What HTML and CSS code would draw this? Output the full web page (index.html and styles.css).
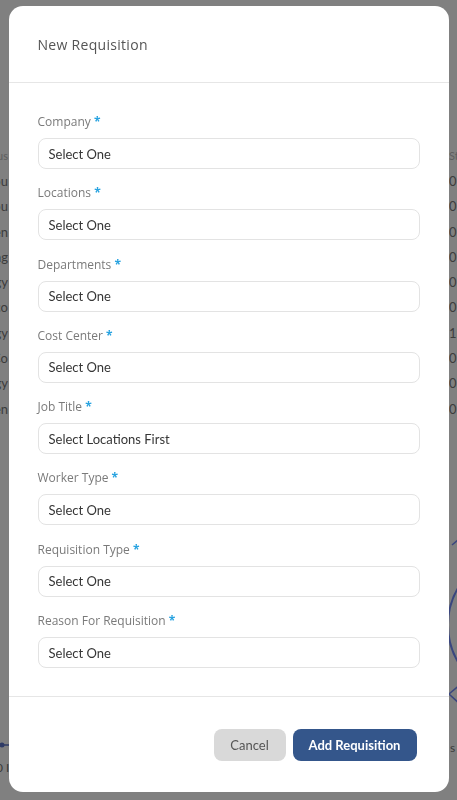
FILE: index.html
```html
<!DOCTYPE html>
<html lang="en">
<head>
<meta charset="utf-8">
<title>New Requisition</title>
<link rel="stylesheet" href="styles.css">
</head>
<body>
<div class="page">
  <div class="bg-table">
    <div class="bg-row head"><span class="l">Status</span><span class="r">Sta</span></div>
    <div class="bg-row"><span class="l">Accou</span><span class="r">0</span></div>
    <div class="bg-row"><span class="l">Accou</span><span class="r">0</span></div>
    <div class="bg-row"><span class="l">Green</span><span class="r">0</span></div>
    <div class="bg-row"><span class="l">Eng</span><span class="r">0</span></div>
    <div class="bg-row"><span class="l">Energy</span><span class="r">0</span></div>
    <div class="bg-row"><span class="l">Pco</span><span class="r">0</span></div>
    <div class="bg-row"><span class="l">Energy</span><span class="r">1</span></div>
    <div class="bg-row"><span class="l">Co</span><span class="r">0</span></div>
    <div class="bg-row"><span class="l">Energy</span><span class="r">0</span></div>
    <div class="bg-row"><span class="l">Green</span><span class="r">0</span></div>
  </div>
  <svg class="bg-chart" width="457" height="800" viewBox="0 0 457 800" aria-hidden="true">
    <circle cx="520" cy="625" r="72" fill="none" stroke="#3a467f" stroke-width="2"/>
    <path d="M452 545 L470 530" stroke="#3a467f" stroke-width="1.5" fill="none"/>
    <path d="M462 683 L449 694 L462 706" stroke="#3a467f" stroke-width="1.5" fill="none"/>
    <line x1="0" y1="745" x2="10" y2="745" stroke="#2f3b66" stroke-width="1.5"/>
    <circle cx="2" cy="745" r="2.5" fill="#2f3b66"/>
    <text x="-4" y="772" font-family="Lato, sans-serif" font-size="12" fill="#3a3a3a">0 I</text>
    <text x="450" y="752" font-family="Lato, sans-serif" font-size="12" fill="#3a3a3a">s</text>
  </svg>
</div>

<div class="overlay">
  <div class="modal">
    <div class="modal-header">
      <h2 class="modal-title">New Requisition</h2>
    </div>
    <div class="modal-body">
      <div class="field">
        <label class="label">Company <span class="req">*</span></label>
        <div class="select">Select One</div>
      </div>
      <div class="field">
        <label class="label">Locations <span class="req">*</span></label>
        <div class="select">Select One</div>
      </div>
      <div class="field">
        <label class="label">Departments <span class="req">*</span></label>
        <div class="select">Select One</div>
      </div>
      <div class="field">
        <label class="label">Cost Center <span class="req">*</span></label>
        <div class="select">Select One</div>
      </div>
      <div class="field">
        <label class="label">Job Title <span class="req">*</span></label>
        <div class="select">Select Locations First</div>
      </div>
      <div class="field">
        <label class="label">Worker Type <span class="req">*</span></label>
        <div class="select">Select One</div>
      </div>
      <div class="field">
        <label class="label">Requisition Type <span class="req">*</span></label>
        <div class="select">Select One</div>
      </div>
      <div class="field">
        <label class="label">Reason For Requisition <span class="req">*</span></label>
        <div class="select">Select One</div>
      </div>
    </div>
    <div class="modal-footer">
      <button class="btn btn-cancel" type="button">Cancel</button>
      <button class="btn btn-primary" type="button">Add Requisition</button>
    </div>
  </div>
</div>
</body>
</html>
```

FILE: styles.css
```css
* { box-sizing: border-box; }

html, body {
  margin: 0;
  padding: 0;
  width: 457px;
  height: 800px;
  overflow: hidden;
  background: #808080;
  font-family: Lato, "Open Sans", sans-serif;
}

.page {
  position: relative;
  width: 457px;
  height: 800px;
}

.bg-table {
  display: flex;
  flex-direction: column;
  padding-top: 143px;
}

.bg-row {
  display: flex;
  justify-content: space-between;
  height: 25.3px;
  align-items: center;
  font-size: 13px;
  color: #3c3c3c;
}

.bg-row.head { color: #5e5e5e; font-size: 11px; }

.bg-row .l {
  width: 8px;
  display: flex;
  justify-content: flex-end;
  white-space: nowrap;
  overflow: hidden;
}

.bg-row .r {
  width: 8px;
  white-space: nowrap;
  overflow: hidden;
}

.bg-chart {
  position: absolute;
  left: 0;
  top: 0;
}

.overlay {
  position: fixed;
  inset: 0;
  display: flex;
  justify-content: center;
  align-items: flex-start;
  padding-top: 6px;
}

.modal {
  width: 440px;
  height: 786px;
  background: #fff;
  border-radius: 14px;
  display: flex;
  flex-direction: column;
  overflow: hidden;
}

.modal-header {
  height: 77px;
  padding: 0 29px 0;
  display: flex;
  align-items: center;
  border-bottom: 1px solid #e6e6e6;
}

.modal-title {
  margin: 0;
  font-family: "Open Sans", sans-serif;
  font-weight: 400;
  font-size: 14px;
  color: #555;
  letter-spacing: 0.3px;
}

.modal-body {
  padding: 31px 29px 28px;
  display: flex;
  flex-direction: column;
  gap: 16.3px;
  border-bottom: 1px solid #e6e6e6;
}

.field {
  display: flex;
  flex-direction: column;
}

.label {
  font-family: "Open Sans", sans-serif;
  font-size: 12px;
  line-height: 16px;
  color: #7a7a7a;
  margin-bottom: 8px;
}

.req {
  color: #29a3e0;
  font-weight: 700;
}

.select {
  height: 31px;
  border: 1px solid #e3e3e3;
  border-radius: 8px;
  padding: 0 10px;
  display: flex;
  align-items: center;
  font-family: Lato, sans-serif;
  font-size: 13px;
  color: #363636;
}

.modal-footer {
  flex: 1;
  display: flex;
  justify-content: flex-end;
  align-items: flex-start;
  gap: 7px;
  padding: 32px 32px 0;
}

.btn {
  height: 32px;
  border: none;
  border-radius: 8px;
  font-family: Lato, sans-serif;
  font-size: 13px;
  cursor: pointer;
}

.btn-cancel {
  width: 72px;
  background: #d9d9d9;
  color: #555;
}

.btn-primary {
  width: 124px;
  background: #34568b;
  color: #fff;
  font-weight: 700;
}
```
